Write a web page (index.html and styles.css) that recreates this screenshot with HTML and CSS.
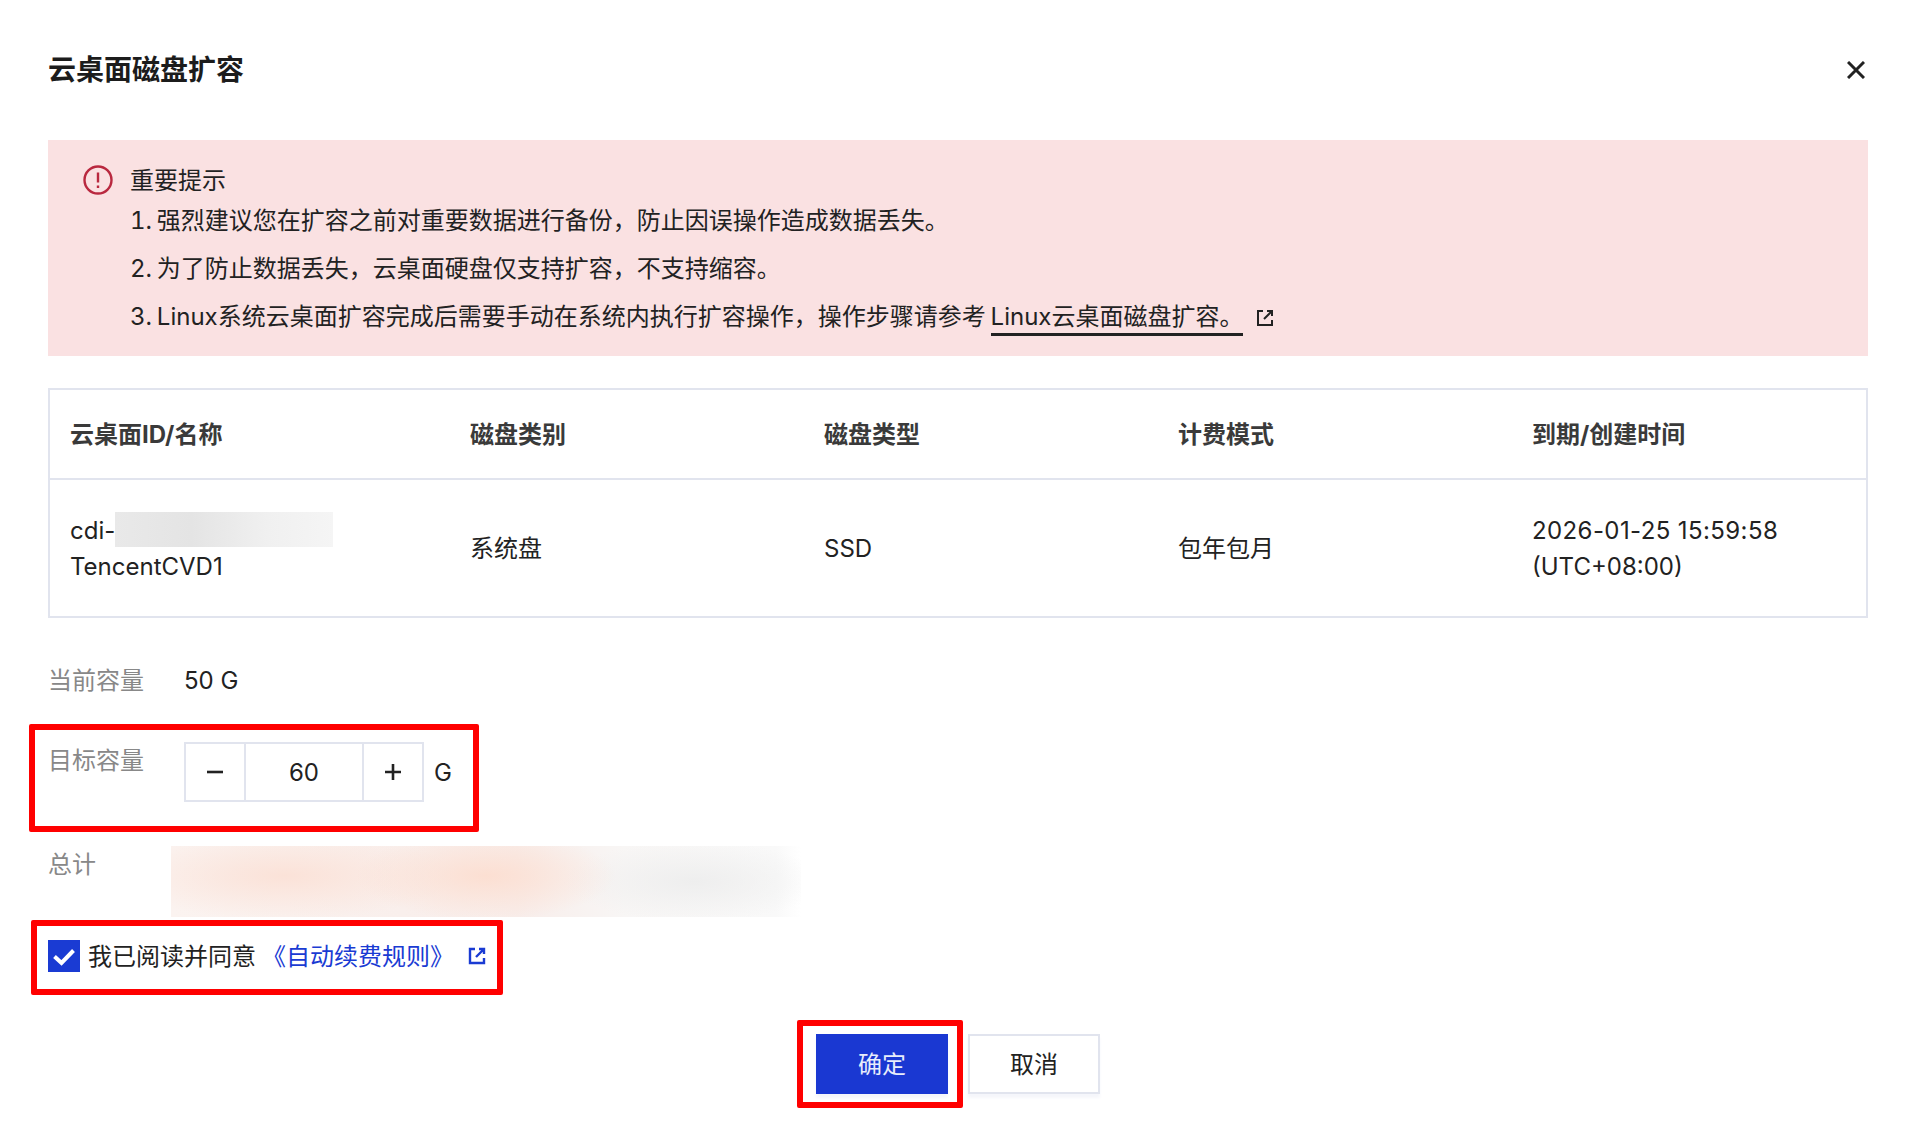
FILE: index.html
```html
<!DOCTYPE html>
<html lang="zh-CN">
<head>
  <meta charset="UTF-8" />
  <title>云桌面磁盘扩容</title>
  <link rel="stylesheet" href="styles.css">
</head>
<body>
  <div class="dialog">
    <div class="dialog-head">
      <h2>云桌面磁盘扩容</h2>
      <svg class="close-icon" width="18" height="18" viewBox="0 0 18 18"><path d="M1 1L17 17M17 1L1 17" /></svg>
    </div>

    <div class="alert">
      <svg class="alert-icon" width="30" height="30" viewBox="0 0 30 30">
        <circle cx="15" cy="15" r="13.5" />
        <path d="M15 7.5V17.5M15 20.5V23" />
      </svg>
      <div class="alert-text">
        <div class="alert-title">重要提示</div>
        <div class="alert-line">1. 强烈建议您在扩容之前对重要数据进行备份，防止因误操作造成数据丢失。</div>
        <div class="alert-line">2. 为了防止数据丢失，云桌面硬盘仅支持扩容，不支持缩容。</div>
        <div class="alert-line">3. Linux系统云桌面扩容完成后需要手动在系统内执行扩容操作，操作步骤请参考 <a class="doc-link">Linux云桌面磁盘扩容。</a>
          <svg class="ext-icon" width="18" height="18" viewBox="0 0 18 18"><path d="M7 2H2V16H16V11M11 2H16V7M16 2L8 10" /></svg>
        </div>
      </div>
    </div>

    <table class="disk-table">
      <thead>
        <tr>
          <th class="col-name">云桌面ID/名称</th>
          <th>磁盘类别</th>
          <th>磁盘类型</th>
          <th>计费模式</th>
          <th>到期/创建时间</th>
        </tr>
      </thead>
      <tbody>
        <tr>
          <td class="name-cell">cdi-<span class="blur-id"></span><br>TencentCVD1</td>
          <td>系统盘</td>
          <td>SSD</td>
          <td>包年包月</td>
          <td><span class="time-date">2026-01-25 15:59:58</span><br>(UTC+08:00)</td>
        </tr>
      </tbody>
    </table>

    <div class="form-row">
      <div class="form-label">当前容量</div>
      <div class="form-value">50 G</div>
    </div>

    <div class="form-row">
      <div class="form-label">目标容量</div>
      <div class="stepper">
        <span class="step-btn"><svg width="18" height="18" viewBox="0 0 18 18"><path d="M1 9H17" /></svg></span>
        <span class="step-value">60</span>
        <span class="step-btn"><svg width="18" height="18" viewBox="0 0 18 18"><path d="M1 9H17M9 1V17" /></svg></span>
      </div>
      <span class="unit">G</span>
    </div>

    <div class="form-row">
      <div class="form-label">总计</div>
      <div class="blur-total"></div>
    </div>

    <div class="agree-row">
      <span class="checkbox"><svg width="32" height="32" viewBox="0 0 32 32"><path d="M6.5 16.5L13.5 23L25.5 10.5" /></svg></span>
      <span class="agree-text">我已阅读并同意</span>
      <a class="rule-link">《自动续费规则》</a>
      <svg class="ext-icon ext-blue" width="18" height="18" viewBox="0 0 18 18"><path d="M7 2H2V16H16V11M11 2H16V7M16 2L8 10" /></svg>
    </div>

    <div class="dialog-foot">
      <button class="btn btn-primary">确定</button>
      <button class="btn">取消</button>
    </div>

    <!-- red marks drawn on top of the screenshot -->
    <div class="mark mark-target"></div>
    <div class="mark mark-agree"></div>
    <div class="mark mark-ok"></div>
  </div>
</body>
</html>
```

FILE: styles.css
```css
* {
  box-sizing: border-box;
}

body {
  margin: 0;
  background-color: #fff;
  color: #222;
  font-family: Inter, "Noto Sans CJK SC", sans-serif;
  font-size: 24px;
  line-height: 36px;
}

.dialog {
  position: relative;
  height: 1142px;
  padding: 0 50px 0 48px;
}

.dialog-head {
  display: flex;
  align-items: center;
  justify-content: space-between;
  height: 140px;
  padding-right: 3px;
}

.dialog-head h2 {
  margin: 0;
  font-size: 28px;
  font-weight: 700;
  color: #1c1c1c;
}

.close-icon path {
  fill: none;
  stroke: #222;
  stroke-width: 3;
}

.alert {
  display: flex;
  height: 216px;
  padding: 25px 0 0 35px;
  background-color: #fae1e2;
}

.alert-icon {
  flex: none;
  margin: 0 17px 0 0;
}

.alert-icon circle,
.alert-icon path {
  fill: none;
  stroke: #b9283f;
  stroke-width: 2.4;
}

.alert-title {
  line-height: 32px;
}

.alert-line {
  line-height: 48px;
  font-variant-numeric: tabular-nums;
  word-spacing: -1.6px;
}

.doc-link {
  padding-bottom: 2px;
  border-bottom: 3px solid #222;
}

.ext-icon {
  margin-left: 8px;
  vertical-align: -2px;
}

.ext-icon path {
  fill: none;
  stroke: #222;
  stroke-width: 2;
}

.ext-blue path {
  stroke: #1a3bd3;
  stroke-width: 2.4;
}

.disk-table {
  width: 100%;
  margin-top: 32px;
  border: 2px solid #e1e4ee;
  border-spacing: 0;
  table-layout: fixed;
}

.disk-table th {
  height: 90px;
  padding: 2px 20px 0;
  border-bottom: 2px solid #e1e4ee;
  color: #3a3a3a;
  font-weight: 700;
  text-align: left;
}

.disk-table .col-name {
  width: 400px;
}

.disk-table td {
  height: 136px;
  padding: 2px 20px 0;
}

.disk-table .name-cell {
  padding-top: 0;
}

.time-date {
  letter-spacing: 0.4px;
}

.blur-id {
  display: inline-block;
  width: 218px;
  height: 35px;
  vertical-align: -8px;
  background: linear-gradient(90deg, #e9e9e9, #e4e4e4 35%, #f0f0f0 70%, #f5f5f5);
}

.form-row {
  display: flex;
  min-height: 36px;
  margin-top: 44px;
}

.form-label {
  flex: none;
  width: 136px;
  height: 36px;
  padding-top: 1px;
  color: #888;
}

.form-value {
  height: 36px;
  padding-top: 1px;
}

.stepper {
  display: flex;
  width: 240px;
  height: 60px;
  border: 2px solid #e1e4ee;
}

.step-btn {
  display: flex;
  align-items: center;
  justify-content: center;
  width: 58px;
}

.step-btn path {
  fill: none;
  stroke: #222;
  stroke-width: 2.6;
}

.step-value {
  flex: 1;
  border-left: 2px solid #e1e4ee;
  border-right: 2px solid #e1e4ee;
  line-height: 58px;
  text-align: center;
}

.unit {
  height: 60px;
  margin-left: 10px;
  line-height: 61px;
}

.blur-total {
  width: 630px;
  height: 71px;
  margin-left: -13px;
  background:
    radial-gradient(ellipse 130px 44px at 50% 42%, #fcdfd2, transparent),
    radial-gradient(ellipse 170px 44px at 18% 42%, #fbe2d8, transparent),
    radial-gradient(ellipse 130px 40px at 83% 50%, #eeeeee, transparent),
    linear-gradient(90deg, #fbf3f0, #f8edea 55%, #f8f6f5 72%, #f9f9f9 96%, #fff);
}

.agree-row {
  display: flex;
  align-items: center;
  height: 32px;
  margin-top: 23px;
}

.checkbox {
  flex: none;
  width: 32px;
  height: 32px;
  background-color: #1a3bd3;
}

.checkbox path {
  fill: none;
  stroke: #fff;
  stroke-width: 4;
}

.agree-text {
  margin-left: 8px;
  padding-top: 2px;
}

.rule-link {
  margin-left: 6px;
  padding-top: 2px;
  color: #1a3bd3;
}

.agree-row .ext-icon {
  margin-left: 14px;
}

.dialog-foot {
  display: flex;
  justify-content: center;
  gap: 20px;
  margin-top: 62px;
}

.btn {
  width: 132px;
  height: 60px;
  padding-top: 2px;
  border: 2px solid #e1e4ee;
  background-color: #fff;
  color: #222;
  font: inherit;
  box-shadow: 0 4px 3px #f5f6fb;
}

.btn-primary {
  border-color: #1a38d2;
  background-color: #1a38d2;
  color: #e8edfb;
}

.mark {
  position: absolute;
  border: 6px solid #f00;
  border-radius: 2px;
}

.mark-target {
  left: 29px;
  top: 724px;
  width: 450px;
  height: 108px;
}

.mark-agree {
  left: 31px;
  top: 920px;
  width: 472px;
  height: 75px;
}

.mark-ok {
  left: 797px;
  top: 1020px;
  width: 166px;
  height: 88px;
}
```
